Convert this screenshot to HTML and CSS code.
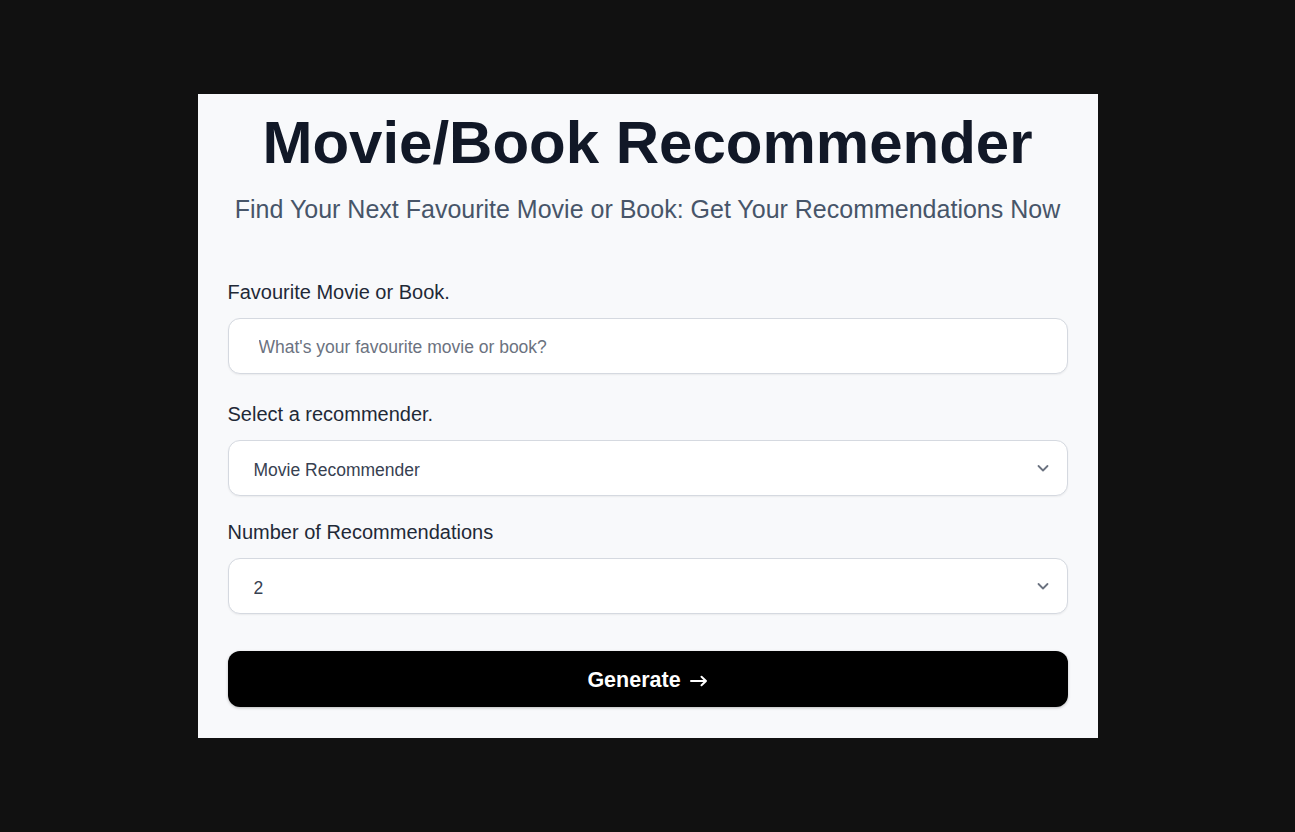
FILE: index.html
```html
<!DOCTYPE html>
<html>
<head>
    <title>Movie/Book Recommender</title>
    <link rel="stylesheet" href="styles.css">
</head>
<body>
    <div class="card">
        <h1 class="title">Movie/Book Recommender</h1>
        <p class="subtitle">Find Your Next Favourite Movie or Book: Get Your Recommendations Now</p>

        <form class="form">
            <div class="field field-first">
                <label for="favourite">Favourite Movie or Book.</label>
                <input id="favourite" type="text" placeholder="What's your favourite movie or book?">
            </div>

            <div class="field field-second">
                <label for="recommender">Select a recommender.</label>
                <div class="select-wrap">
                    <select id="recommender">
                        <option>Movie Recommender</option>
                        <option>Book Recommender</option>
                    </select>
                    <svg class="chevron" width="14" height="14" viewBox="0 0 14 14"><path d="M2.5 5l4.5 4.5 4.5-4.5" fill="none" stroke="currentColor" stroke-width="1.8" stroke-linecap="round" stroke-linejoin="round"/></svg>
                </div>
            </div>

            <div class="field">
                <label for="count">Number of Recommendations</label>
                <div class="select-wrap">
                    <select id="count">
                        <option>1</option>
                        <option selected>2</option>
                        <option>3</option>
                        <option>4</option>
                        <option>5</option>
                    </select>
                    <svg class="chevron" width="14" height="14" viewBox="0 0 14 14"><path d="M2.5 5l4.5 4.5 4.5-4.5" fill="none" stroke="currentColor" stroke-width="1.8" stroke-linecap="round" stroke-linejoin="round"/></svg>
                </div>
            </div>

            <button type="button" class="generate">
                <span>Generate</span>
                <svg class="arrow" width="18" height="12" viewBox="0 0 18 12"><path d="M1 6h15M11.5 1.8L16 6l-4.5 4.2" fill="none" stroke="currentColor" stroke-width="2" stroke-linecap="round" stroke-linejoin="round"/></svg>
            </button>
        </form>
    </div>
</body>
</html>
```

FILE: styles.css
```css
html, body {
    margin: 0;
    height: 100%;
}
body {
    background: #111111;
    font-family: "Liberation Sans", Arial, sans-serif;
    display: flex;
    align-items: center;
    justify-content: center;
}
.card {
    width: 900px;
    box-sizing: border-box;
    padding: 19px 30px 31px;
    background: #f8f9fb;
}
.title {
    margin: 0;
    font-size: 60px;
    line-height: 60px;
    font-weight: 700;
    color: #111827;
    text-align: center;
}
.subtitle {
    margin: 20px 0 0;
    font-size: 25px;
    line-height: 32px;
    color: #475569;
    text-align: center;
}
.form {
    margin-top: 53px;
}
.field {
    margin-bottom: 37px;
}
.field-first {
    margin-bottom: 26px;
}
.field-second {
    margin-bottom: 22px;
}
.field label {
    display: block;
    font-size: 20px;
    line-height: 28px;
    color: #1f2937;
    margin-bottom: 12px;
}
.field input,
.field select {
    display: block;
    width: 100%;
    height: 56px;
    box-sizing: border-box;
    border: 1px solid #d5d9e0;
    border-radius: 12px;
    background: #ffffff;
    font-family: inherit;
    font-size: 17.5px;
    color: #374151;
    box-shadow: 0 1px 2px rgba(0, 0, 0, 0.06);
    outline: none;
}
.field input {
    padding: 3px 20px 0 30px;
}
.field input::placeholder {
    color: #6b7280;
}
.select-wrap {
    position: relative;
}
.field select {
    appearance: none;
    -webkit-appearance: none;
    padding: 3px 40px 0 25px;
}
.chevron {
    position: absolute;
    right: 18px;
    top: 21px;
    color: #6b7280;
    pointer-events: none;
}
.generate {
    display: flex;
    align-items: center;
    justify-content: center;
    gap: 9px;
    width: 100%;
    height: 56px;
    padding: 2px 0 0;
    border: none;
    border-radius: 12px;
    background: #000000;
    color: #ffffff;
    font-family: inherit;
    font-size: 21.5px;
    font-weight: 700;
    box-shadow: 0 1px 3px rgba(0, 0, 0, 0.25);
    cursor: pointer;
}
.arrow {
    margin-top: 1px;
}
```
